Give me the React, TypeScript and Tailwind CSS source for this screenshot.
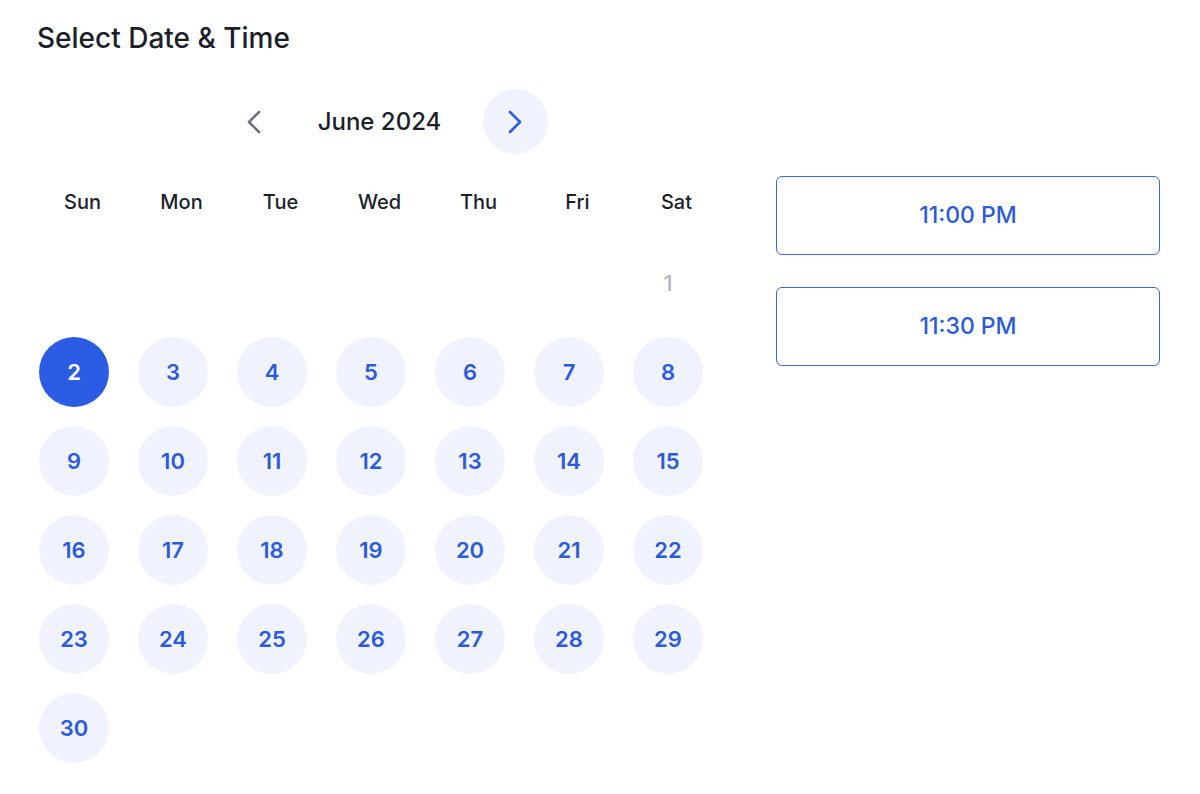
import React from "react";

const days: (number | null)[] = [
  null, null, null, null, null, null, 1,
  ...Array.from({ length: 29 }, (_, i) => i + 2),
];

const weekdays = ["Sun", "Mon", "Tue", "Wed", "Thu", "Fri", "Sat"];

function Chevron({ dir, color }: { dir: "left" | "right"; color: string }) {
  const d = dir === "left" ? "M13 2 L3 12 L13 22" : "M3 2 L13 12 L3 22";
  return (
    <svg width="16" height="24" viewBox="0 0 16 24" fill="none">
      <path d={d} stroke={color} strokeWidth="2.6" strokeLinecap="round" strokeLinejoin="round" />
    </svg>
  );
}

export default function App() {
  return (
    <div className="min-h-screen bg-white font-['Inter',sans-serif] text-[#1c1f2b]">
      <div className="pt-[22px] pl-[37px]">
        <h1 className="text-[28px] leading-[32px] font-medium">Select Date &amp; Time</h1>
      </div>

      <div className="flex pl-[33px] mt-[35px]">
        <div className="w-[693px]">
          <div className="flex items-center justify-center h-[65px] pl-[10px]">
            <button className="w-[65px] h-[65px] rounded-full flex items-center justify-center">
              <Chevron dir="left" color="#6b7280" />
            </button>
            <div className="w-[196px] pr-[10px] text-center text-[24px] leading-[30px] font-medium">
              June 2024
            </div>
            <button className="w-[65px] h-[65px] rounded-full bg-[#f0f3fe] flex items-center justify-center">
              <Chevron dir="right" color="#2c5ce0" />
            </button>
          </div>

          <div className="grid grid-cols-7 mt-[34px]">
            {weekdays.map((w) => (
              <div key={w} className="text-center text-[20px] leading-[28px] font-medium">
                {w}
              </div>
            ))}
          </div>

          <div className="grid grid-cols-7 gap-y-[19px] mt-[32px]">
            {days.map((d, i) => (
              <div key={i} className="pl-[6px]">
                {d === null ? (
                  <div className="w-[70px] h-[70px]" />
                ) : d === 1 ? (
                  <div className="w-[70px] h-[70px] flex items-center justify-center text-[22px] font-medium text-[#b4b6bb]">
                    1
                  </div>
                ) : d === 2 ? (
                  <div className="w-[70px] h-[70px] rounded-full bg-[#2d5ce4] flex items-center justify-center text-[22px] font-semibold text-white">
                    2
                  </div>
                ) : (
                  <div className="w-[70px] h-[70px] rounded-full bg-[#f0f3fe] flex items-center justify-center text-[22px] font-semibold text-[#2c5bd9]">
                    {d}
                  </div>
                )}
              </div>
            ))}
          </div>
        </div>

        <div className="ml-[50px] w-[384px] mt-[87px] flex flex-col gap-[32px]">
          {["11:00 PM", "11:30 PM"].map((t) => (
            <button
              key={t}
              className="h-[79px] w-full rounded-[6px] border-[1.5px] border-[#3b69d9] text-[23px] font-medium text-[#2c5bd9] flex items-center justify-center"
            >
              {t}
            </button>
          ))}
        </div>
      </div>
    </div>
  );
}
